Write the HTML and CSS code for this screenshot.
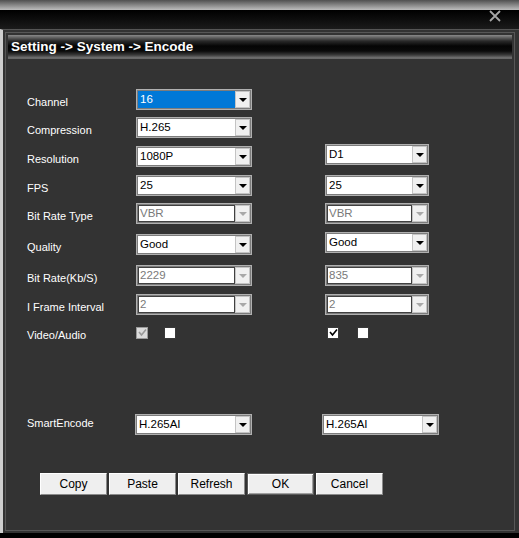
FILE: index.html
```html
<!DOCTYPE html>
<html lang="en">
<head>
    <meta charset="UTF-8">
    <meta name="viewport" content="width=device-width, initial-scale=1.0">
    <title>Encode</title>
    <link rel="stylesheet" href="styles.css">
</head>
<body>

<div class="top"></div>
<div class="caption">
    <svg class="close" width="12" height="12" viewBox="0 0 12 12">
        <path d="M1 1 L11 11 M11 1 L1 11" stroke="#a6a6a6" stroke-width="1.8" fill="none"/>
    </svg>
</div>

<div class="frame">
  <div class="panel">
    <div class="crumb">Setting -&gt; System -&gt; Encode</div>

    <div class="form">
        <div class="label">Channel</div>
        <div class="combo"><span class="val sel">16</span><span class="arrow"></span></div>
        <div></div>

        <div class="label">Compression</div>
        <div class="combo"><span class="val">H.265</span><span class="arrow"></span></div>
        <div></div>

        <div class="label">Resolution</div>
        <div class="combo"><span class="val">1080P</span><span class="arrow"></span></div>
        <div class="combo up"><span class="val">D1</span><span class="arrow"></span></div>

        <div class="label">FPS</div>
        <div class="combo"><span class="val">25</span><span class="arrow"></span></div>
        <div class="combo"><span class="val">25</span><span class="arrow"></span></div>

        <div class="label">Bit Rate Type</div>
        <div class="combo off"><span class="val">VBR</span><span class="arrow"></span></div>
        <div class="combo off"><span class="val">VBR</span><span class="arrow"></span></div>

        <div class="label">Quality</div>
        <div class="combo"><span class="val">Good</span><span class="arrow"></span></div>
        <div class="combo up"><span class="val">Good</span><span class="arrow"></span></div>

        <div class="label">Bit Rate(Kb/S)</div>
        <div class="combo off"><span class="val">2229</span><span class="arrow"></span></div>
        <div class="combo off"><span class="val">835</span><span class="arrow"></span></div>

        <div class="label">I Frame Interval</div>
        <div class="combo off"><span class="val">2</span><span class="arrow"></span></div>
        <div class="combo off"><span class="val">2</span><span class="arrow"></span></div>

        <div class="label">Video/Audio</div>
        <div class="checks">
            <span class="check off">
                <svg width="9" height="9" viewBox="0 0 9 9"><path d="M1 4 L3.5 7 L8 1.5" stroke="#9a9a9a" stroke-width="1.6" fill="none"/></svg>
            </span>
            <span class="check"></span>
        </div>
        <div class="checks right">
            <span class="check">
                <svg width="9" height="9" viewBox="0 0 9 9"><path d="M1 4 L3.5 7 L8 1.5" stroke="#000" stroke-width="1.6" fill="none"/></svg>
            </span>
            <span class="check"></span>
        </div>
    </div>

    <div class="smart">
        <div class="label">SmartEncode</div>
        <div class="combo"><span class="val">H.265AI</span><span class="arrow"></span></div>
        <div class="combo"><span class="val">H.265AI</span><span class="arrow"></span></div>
    </div>

    <div class="buttons">
        <button>Copy</button>
        <button>Paste</button>
        <button>Refresh</button>
        <button class="default">OK</button>
        <button>Cancel</button>
    </div>
  </div>
</div>

</body>
</html>
```

FILE: styles.css
```css
body {
    margin: 0;
    width: 519px;
    height: 538px;
    overflow: hidden;
    background: #000;
    font-family: "Liberation Sans", Arial, sans-serif;
}
.top {
    height: 10px;
    background: linear-gradient(#505050, #bdbdbd);
}
.caption {
    height: 19px;
    background: linear-gradient(#000, #1b1b1b);
    display: flex;
    justify-content: flex-end;
    align-items: flex-start;
    padding-right: 18px;
}
.frame {
    height: 504px;
    box-sizing: border-box;
    background: #333;
    border-top: 1px solid #555;
    border-left: 3px solid #cfcfcf;
    padding: 2px 4px 2px 2px;
}
.panel {
    height: 100%;
    box-sizing: border-box;
    border: 1px solid #575757;
    padding: 2px;
}
.crumb {
    height: 24px;
    box-sizing: border-box;
    padding-left: 3px;
    line-height: 24px;
    color: #fff;
    font-weight: bold;
    font-size: 13.5px;
    background: linear-gradient(#8a8a8a 0, #6a6a6a 2px, #2a2a2a 6px, #050505 11px, #0a0a0a 16px, #3a3a3a 20px, #757575 23px, #5a5a5a 24px);
}
.form {
    display: grid;
    grid-template-columns: 109px 189px 104px;
    grid-template-rows: 28px 29px 29px 28px 31px 31px 29px 32px 21px;
    align-items: start;
    padding: 30px 0 0 19px;
}
.form > :nth-child(3n+2) {
    width: 116px;
}
.label {
    color: #fff;
    font-size: 11px;
    height: 21px;
    box-sizing: border-box;
    display: flex;
    align-items: center;
    padding-top: 4px;
}
.combo {
    display: flex;
    box-sizing: border-box;
    height: 21px;
    border: 1px solid #b0b0b0;
    box-shadow: inset 0 0 0 1px #7c7c7c;
    padding: 1px;
    background: #fff;
}
.combo.up {
    margin-top: -2px;
}
.val {
    flex: 1;
    font-size: 11.5px;
    line-height: 17px;
    padding-left: 2px;
    color: #000;
    overflow: hidden;
}
.val.sel {
    background: #0078d7;
    color: #fff;
}
.arrow {
    width: 15px;
    box-sizing: border-box;
    background: #f0f0f0;
    border: 1px solid #c4c4c4;
    display: flex;
    align-items: center;
    justify-content: center;
}
.arrow::after {
    content: "";
    border-left: 4px solid transparent;
    border-right: 4px solid transparent;
    border-top: 4px solid #000;
}
.combo.off .val {
    color: #7a7a7a;
    box-shadow: inset 0 0 0 1px #404040;
}
.combo.off .arrow::after {
    border-top-color: #a8a8a8;
}
.checks {
    display: flex;
    align-items: center;
    height: 13px;
    gap: 16px;
}
.checks.right {
    padding-left: 2px;
    gap: 18px;
}
.check {
    flex-shrink: 0;
    width: 12px;
    height: 12px;
    box-sizing: border-box;
    background: #fff;
    border: 1px solid #3a3a3a;
    display: flex;
    align-items: center;
    justify-content: center;
}
.check.off {
    background: #dcdcdc;
    border-color: #9a9a9a;
}
.form .checks + .label,
.form > .label:nth-last-child(3) {
    height: 13px;
    padding-top: 5px;
}
.smart {
    display: flex;
    align-items: center;
    margin-top: 67px;
    padding-left: 19px;
}
.smart .label {
    width: 108px;
    padding-top: 0;
    padding-bottom: 4px;
}
.smart .combo {
    width: 117px;
}
.smart .combo + .combo {
    margin-left: 70px;
}
.buttons {
    display: flex;
    gap: 2px;
    margin-top: 38px;
    padding-left: 32px;
}
.buttons button {
    width: 67px;
    height: 22px;
    margin: 0;
    padding: 0;
    font-family: "Liberation Sans", Arial, sans-serif;
    font-size: 12px;
    color: #000;
    background: #efefef;
    border: 1px solid;
    border-color: #fff #8a8a8a #8a8a8a #fff;
}
.buttons button.default {
    border-color: #5a5a5a;
    box-shadow: inset 1px 1px 0 #fff, inset -1px -1px 0 #a0a0a0;
}
```
